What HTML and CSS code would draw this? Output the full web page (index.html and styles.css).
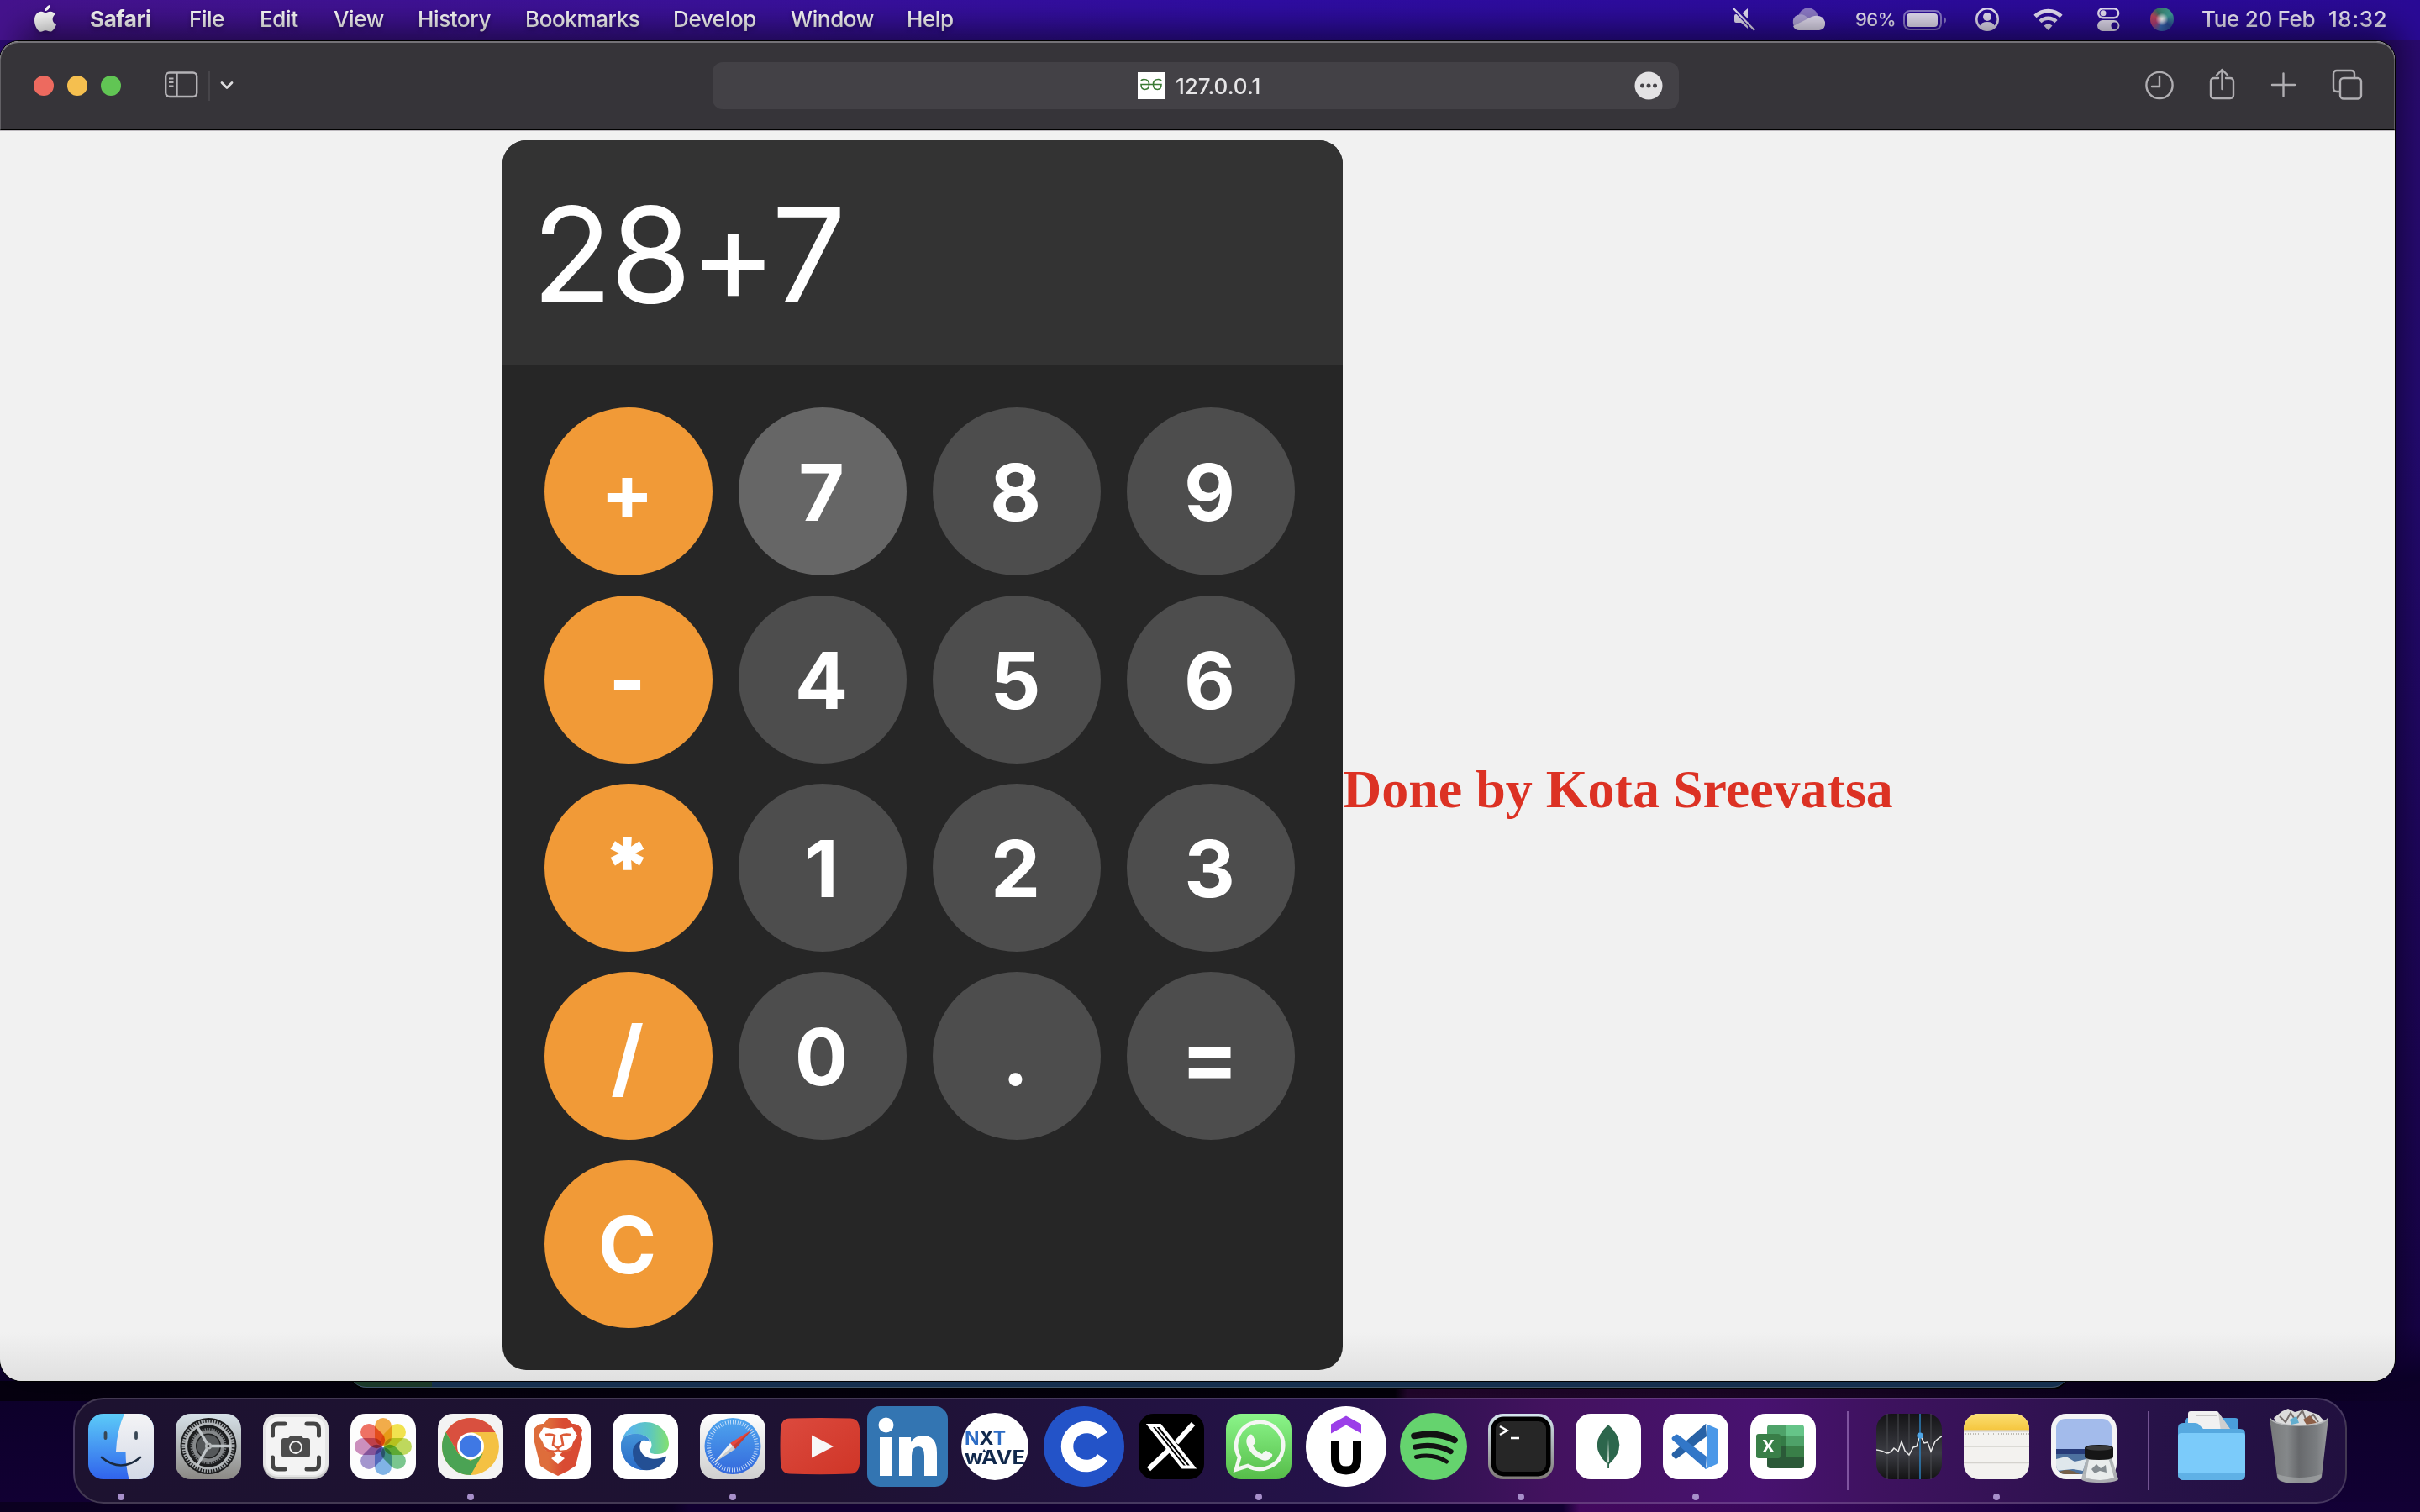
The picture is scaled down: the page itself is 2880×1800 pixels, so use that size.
FILE: index.html
```html
<!DOCTYPE html>
<html lang="en">
<head>
<meta charset="utf-8">
<title>Calculator</title>
<link rel="stylesheet" href="styles.css">
</head>
<body>
<div class="desktop">
  <header class="menubar">
    <svg class="apple" width="26" height="32" viewBox="0 0 26 32" fill="#fff"><path d="M18.300 0C18.500 3.600 16 7 12.700 7.300 12.300 4 15 .6 18.300 0zM13.200 9.200C14.500 9.200 16.500 7.600 19 7.700 21.500 7.800 23.700 9 25 11 20 14 20.800 21.200 26 23.200 24.800 26.500 22 31.500 19 31.600 16.800 31.700 16 30.300 13.300 30.300 10.600 30.300 9.700 31.700 7.600 31.700 4 31.700 0 24.500 0 18.200 0 11.500 4 7.800 8 7.800 10.200 7.800 12 9.200 13.200 9.200z"/></svg>
    <nav class="menus">
      <span class="app">Safari</span><span>File</span><span>Edit</span><span>View</span><span>History</span><span>Bookmarks</span><span>Develop</span><span>Window</span><span>Help</span>
    </nav>
    <div class="status">
      <svg width="70" height="28" viewBox="0 0 70 28"><path d="M18 1v24l-8-7H4q-2 0-2-2v-6q0-2 2-2h6z" fill="#e8e2f6"/><path d="M1 0l26 27" stroke="#2c0b99" stroke-width="6"/><path d="M1 1l25 26" stroke="#e8e2f6" stroke-width="2.200"/></svg>
      <svg width="77" height="28" viewBox="0 0 77 28"><circle cx="20" cy="12" r="11.500" fill="#8f7cca"/><path d="M9 26a9 9 0 0 1-2-17 11 11 0 0 1 12 3l8 6-17 8z" fill="#b5a8dd"/><path d="M2 22l22-11q12-4 16 6 1 9-7 10H9q-5 0-7-5z" fill="#e8e2f6"/></svg>
      <span class="percent">96%</span>
      <svg class="battery" width="86" height="26" viewBox="0 0 86 26"><rect x="1" y="2" width="44" height="22" rx="7" fill="none" stroke="#8b79cc" stroke-width="2"/><rect x="4" y="5" width="37" height="16" rx="4" fill="#e8e2f6"/><path d="M48 9q3 1 3 4t-3 4z" fill="#8b79cc"/></svg>
      <svg width="69" height="30" viewBox="0 0 69 30"><circle cx="14" cy="15" r="12.700" fill="none" stroke="#e8e2f6" stroke-width="2.600"/><circle cx="14" cy="12" r="5" fill="#e8e2f6"/><path d="M5 23q2-5 9-5t9 5q-4 4-9 4t-9-4z" fill="#e8e2f6"/></svg>
      <svg width="76" height="30" viewBox="0 0 76 30" fill="none" stroke="#e8e2f6" stroke-width="4.600"><path d="M2 11.500a22 22 0 0 1 31 0M8 17.600a13.500 13.500 0 0 1 19 0"/><path d="M17.500 28l-5-5.500q5-4 10 0z" fill="#e8e2f6" stroke="none"/></svg>
      <svg width="63" height="30" viewBox="0 0 63 30"><rect x="1.200" y="2.200" width="24" height="11" rx="5.500" fill="none" stroke="#e8e2f6" stroke-width="2.400"/><circle cx="7" cy="7.700" r="3.500" fill="#e8e2f6"/><rect x="0" y="16" width="26.400" height="13" rx="6.500" fill="#e8e2f6"/><circle cx="20.500" cy="22.500" r="4" fill="#2b0a97"/></svg>
      <i class="siri"></i>
      <span class="date">Tue 20 Feb</span><span class="clock">18:32</span>
    </div>
  </header>

  <main class="stage">
    <section class="window">
      <div class="toolbar">
        <div class="lights"><i class="red"></i><i class="yellow"></i><i class="green"></i></div>
        <svg class="sidebar" width="40" height="32" viewBox="0 0 40 32" fill="none" stroke="#b4b2b6" stroke-width="2.400"><rect x="1.200" y="1.500" width="37" height="28.500" rx="4.500"/><path d="M14.500 1.500V30"/><path d="M5 8.500h5.500M5 13h5.500M5 17.500h5.500" stroke-width="2"/></svg>
        <i class="divider"></i>
        <svg class="chevron" width="16" height="12" viewBox="0 0 16 12" fill="none" stroke="#dedddf" stroke-width="2.800" stroke-linecap="round" stroke-linejoin="round"><path d="M2 2.500l6 6 6-6"/></svg>
        <div class="address">
          <svg class="favicon" width="32" height="32" viewBox="0 0 32 32"><path fill="#fff" d="M0 0h32v32H0z"/><path d="M4 11q0-2.500 3.500-2.500 6 0 6 6t-5 6q-4.500 0-4.500-6h24q0 6-4.500 6-5 0-5-6t6-6q3.500 0 3.500 2.500" fill="none" stroke="#3b7a35" stroke-width="1.600"/></svg>
          <span class="url">127.0.0.1</span>
          <svg class="more" width="34" height="34" viewBox="0 0 34 34"><circle cx="17" cy="17" r="16.500" fill="#e3e2e4"/><g fill="#454348"><circle cx="9.500" cy="17" r="2.500"/><circle cx="17" cy="17" r="2.500"/><circle cx="24.500" cy="17" r="2.500"/></g></svg>
        </div>
        <div class="tools">
          <svg width="77" height="38" viewBox="0 0 77 38"><circle cx="17" cy="20.500" r="15.600"/><path d="M17 10v12H8"/></svg>
          <svg width="74" height="38" viewBox="0 0 74 38"><path d="M10 12H5q-4 0-4 4v16q0 4 4 4h19q4 0 4-4V16q0-4-4-4h-5M14.500 25V2M8 8.500L14.500 2 21 8.500"/></svg>
          <svg width="72" height="38" viewBox="0 0 72 38"><path d="M0 20h27M13.500 6.500v27"/></svg>
          <svg width="36" height="38" viewBox="0 0 36 38"><rect x="9" y="12" width="25" height="24.500" rx="4"/><path d="M9 28H5q-4 0-4-4V7q0-4 4-4h17q4 0 4 4v5"/></svg>
        </div>
      </div>
      <div class="page">
        <div class="calculator">
          <div class="display">28+7</div>
          <div class="keys">
            <b class="op">+</b><b class="hover">7</b><b>8</b><b>9</b>
            <b class="op">-</b><b>4</b><b>5</b><b>6</b>
            <b class="op star">*</b><b>1</b><b>2</b><b>3</b>
            <b class="op slash">/</b><b>0</b><b>.</b><b class="equals">=</b>
            <b class="op">C</b>
          </div>
        </div>
        <h1>Done by Kota Sreevatsa</h1>
      </div>
    </section>
  </main>
  <div class="behind"></div>

  <footer class="dock">
    <div class="slot run"><svg width="78" height="78" viewBox="0 0 78 78"><defs><linearGradient id="fb" x2="0" y2="1"><stop stop-color="#5ccbf8"/><stop offset="1" stop-color="#3063ec"/></linearGradient><linearGradient id="fw" x2="0" y2="1"><stop stop-color="#f4f4f6"/><stop offset="1" stop-color="#d3d9e6"/></linearGradient><clipPath id="sq"><rect width="78" height="78" rx="18"/></clipPath></defs><g clip-path="url(#sq)"><path fill="url(#fb)" d="M0 0h78v78H0z"/><path fill="url(#fw)" d="M43 0Q34 20 33 45H44.500Q44.500 63 48.500 78H78V0z"/></g><path d="M20.500 23v6M57 23v6" stroke="#384654" stroke-width="3.800" stroke-linecap="round"/><path d="M16 52Q39 71 62 52" fill="none" stroke="#1b2a3e" stroke-width="2.600" stroke-linecap="round"/></svg></div>
    <div class="slot"><svg width="78" height="78" viewBox="0 0 78 78"><defs><linearGradient id="st" x2="0" y2="1"><stop stop-color="#d6e1e8"/><stop offset="1" stop-color="#8b8985"/></linearGradient></defs><rect width="78" height="78" rx="18" fill="url(#st)"/><circle cx="39" cy="38.500" r="33.500" fill="#1c1d1e"/><g fill="none"><circle cx="39" cy="38.500" r="29.500" stroke="#a5a9ac" stroke-width="4" stroke-dasharray="1.700 1.400"/><circle cx="39" cy="38.500" r="26.500" stroke="#b4b8ba" stroke-width="3"/><circle cx="39" cy="38.500" r="20" stroke="#74777a" stroke-width="3" stroke-dasharray="1.500 1.200"/><circle cx="39" cy="38.500" r="17" stroke="#85888a" stroke-width="4"/></g><circle cx="39" cy="38.500" r="13.500" fill="#55585a"/><path d="M39 38.500h27M39 38.500L25.500 15M39 38.500L25.500 62" stroke="#c0c5c8" stroke-width="3.400"/><circle cx="39" cy="38.500" r="4" fill="#b4b8ba"/><circle cx="39" cy="38.500" r="1.500" fill="#222"/></svg></div>
    <div class="slot"><svg width="78" height="78" viewBox="0 0 78 78"><rect width="78" height="78" rx="18" fill="#c6c6c6"/><rect width="78" height="75" rx="18" fill="#e5e5e5"/><rect x="4" y="4" width="70" height="69" rx="14" fill="#f3f3f3"/><g fill="none" stroke="#444" stroke-width="5" stroke-linecap="round"><path d="M11.500 26V18q0-6 6-6H26M52 12h8.500q6 0 6 6v8M66.500 52v8q0 6-6 6H52M26 66H17.500q-6 0-6-6V52"/></g><path d="M25 29h5l3-3h12l3 3h5q3 0 3 3v17q0 3-3 3H25q-3 0-3-3V32q0-3 3-3z" fill="#4c4c4c"/><circle cx="39" cy="40" r="7" fill="#4c4c4c" stroke="#f3f3f3" stroke-width="1.800"/></svg></div>
    <div class="slot"><svg width="78" height="78" viewBox="0 0 78 78"><rect width="78" height="78" rx="18" fill="#fdfdfd"/><g class="petals"><rect x="29" y="5" width="20" height="33" rx="10" fill="#f3a536"/><rect x="29" y="5" width="20" height="33" rx="10" fill="#f2e13b" transform="rotate(45 39 39)"/><rect x="29" y="5" width="20" height="33" rx="10" fill="#b9d64c" transform="rotate(90 39 39)"/><rect x="29" y="5" width="20" height="33" rx="10" fill="#6cc283" transform="rotate(135 39 39)"/><rect x="29" y="5" width="20" height="33" rx="10" fill="#73ade6" transform="rotate(180 39 39)"/><rect x="29" y="5" width="20" height="33" rx="10" fill="#9a8bcb" transform="rotate(225 39 39)"/><rect x="29" y="5" width="20" height="33" rx="10" fill="#c884b8" transform="rotate(270 39 39)"/><rect x="29" y="5" width="20" height="33" rx="10" fill="#ef6253" transform="rotate(315 39 39)"/></g></svg></div>
    <div class="slot run"><svg width="78" height="78" viewBox="0 0 78 78"><rect width="78" height="78" rx="18" fill="#f3f3f3"/><circle cx="39" cy="39" r="34" fill="#f4c143"/><path d="M9.550 22A34 34 0 0 1 68.450 22H39L24.300 47.500z" fill="#d9503f"/><path d="M9.550 22L24.300 47.500 39 56 53.700 47.500 39 73A34 34 0 0 1 9.550 22z" fill="#4ba354"/><circle cx="39" cy="38.500" r="16" fill="#fff"/><circle cx="39" cy="38.500" r="13" fill="#3f78e4"/></svg></div>
    <div class="slot"><svg width="78" height="78" viewBox="0 0 78 78"><defs><linearGradient id="br"><stop offset=".3" stop-color="#de6d3b"/><stop offset=".6" stop-color="#d94b33"/></linearGradient></defs><rect width="78" height="78" rx="18" fill="#fff"/><path d="M28 5h22l6 7q7-1 12 7l-1 5 1 6-8 32-9 6-12 6-12-6-9-6-8-32 1-6-1-5q5-8 12-7z" fill="url(#br)"/><path d="M22 16l9 2 8-1 8 1 9-2 6 10-5 8-3 9-9 2-4 4 4 3-6 6-6-6 4-3-4-4-9-2-3-9-5-8z" fill="#fff"/><path d="M24 25q8-1 11 1l-2 11 6 4 6-4-2-11q3-2 11-1M22 40l6 4 8 1 3-2 3 2 8-1 6-4" fill="none" stroke="#dc5a37" stroke-width="2.600"/><path d="M39 48l8 5-8 7-8-7z" fill="#fff"/></svg></div>
    <div class="slot"><svg width="78" height="78" viewBox="0 0 78 78"><defs><linearGradient id="eg"><stop offset=".2" stop-color="#5ab6e8"/><stop offset=".6" stop-color="#5cc7c0"/><stop offset="1" stop-color="#83e070"/></linearGradient><linearGradient id="eb" x2="0" y2="1"><stop stop-color="#4393d8"/><stop offset="1" stop-color="#2a6bc8"/></linearGradient></defs><rect width="78" height="78" rx="18" fill="#fff"/><path d="M10 36C13 20 25 10 39 10c17 0 28 13 28 26 0 8-6 12-13 12-8 0-12-2-9-6 2-3 2-6 0-10-4-6-13-8-20-8-9 0-14 6-15 12z" fill="url(#eg)"/><path d="M10 38c0-10 8-14 17-14 9 0 16 4 18 10-7-4-13-2-15 3-4 8 4 18 10 22-2 5-1 7-1 8-17 0-29-13-29-29z" fill="url(#eb)"/><path d="M22 32c-10 7-8 24 9 34 14 4 28-2 33-14 0-1-1-2-2-1-10 5-21 3-26-4-4-6-2-11 1-15-5-3-10-3-15 0z" fill="none"/><path d="M24 32c-11 8-8 26 8 34 14 4 27-2 32-14 0-1-1-2-2-1-10 5-22 3-27-4-4-6-3-11 0-15-3-2-7-2-11 0z" fill="#234f94"/><path d="M10 38c0-10 8-14 17-14 7 0 13 2 17 7-11-2-20 6-20 14 0 9 4 16 12 22C20 66 10 53 10 38z" fill="url(#eb)"/></svg></div>
    <div class="slot run"><svg width="78" height="78" viewBox="0 0 78 78"><defs><linearGradient id="sf" x2="0" y2="1"><stop stop-color="#4fa6ee"/><stop offset="1" stop-color="#3468dc"/></linearGradient><linearGradient id="sb" x2="0" y2="1"><stop stop-color="#fff"/><stop offset="1" stop-color="#cfcfcf"/></linearGradient></defs><rect width="78" height="78" rx="18" fill="url(#sb)"/><circle cx="39" cy="38.500" r="33.500" fill="url(#sf)"/><circle cx="39" cy="38.500" r="28.500" fill="none" stroke="#cfe2f9" stroke-width="5" stroke-dasharray=".9 2.080"/><path d="M62 19L36 35 42 42z" fill="#e5483e"/><path d="M16 59L36 35l6 7z" fill="#f0f0f0"/><path d="M62 19L39 38.500l3 3.500zM16 59l23-20.500 3 3.500z" fill="#000" opacity=".15"/></svg></div>
    <div class="slot"><svg width="96" height="78" viewBox="0 0 96 78"><defs><linearGradient id="yt" x2="1" y2="1"><stop stop-color="#dc4a3e"/><stop offset="1" stop-color="#cf3527"/></linearGradient></defs><path d="M12 5.500Q48 4.500 84 5.500q10 0 11 12 1 21 0 42-1 12-11 12-36 1.500-72 0Q2 71.500 1 59.500 0 38.500 1 17.500 2 5.500 12 5.500z" fill="url(#yt)"/><path d="M38 25.500l26 13.500-26 13.500z" fill="#f7f7f7"/></svg></div>
    <div class="slot"><svg width="96" height="96" viewBox="0 0 96 96"><rect width="96" height="96" rx="15" fill="#3375b2"/><circle cx="22.500" cy="22.500" r="9" fill="#fff"/><path d="M15 37h15v46H15zM38 37h14v6q5-8 14-8 17 0 17 20v28H68V59q0-11-7-11-8 0-8 11v24H38z" fill="#fff"/></svg></div>
    <div class="slot"><svg width="80" height="80" viewBox="0 0 80 80"><circle cx="40" cy="40" r="40" fill="#fff"/><g font-family="Inter, sans-serif" font-weight="700" font-size="23"><text x="4" y="38" textLength="49" lengthAdjust="spacingAndGlyphs" fill="#2d6cc4">N<tspan fill="#10284c">X</tspan>T</text><text x="4" y="61" textLength="72" lengthAdjust="spacingAndGlyphs" fill="#10284c">wAVE</text></g><path d="M25 47l2-4 3 4z" fill="#10284c"/></svg></div>
    <div class="slot coin"><svg width="96" height="96" viewBox="0 0 96 96"><circle cx="48" cy="48" r="48" fill="#2353c8"/><path d="M70 35A23 23 0 1 0 70 61" fill="none" stroke="#fff" stroke-width="14.500"/></svg></div>
    <div class="slot"><svg width="78" height="78" viewBox="0 0 78 78"><rect width="78" height="78" rx="18" fill="#000"/><path d="M65 12L45 34.500M36 43L12 66" stroke="#fff" stroke-width="6"/><path d="M13 14H25.500L65 63.500H52.500z" fill="#000" stroke="#fff" stroke-width="4"/><path d="M19 14L59 64" stroke="#fff" stroke-width="2"/></svg></div>
    <div class="slot run"><svg width="78" height="78" viewBox="0 0 78 78"><defs><linearGradient id="wa" x2="0" y2="1"><stop stop-color="#8bf58a"/><stop offset="1" stop-color="#56bd49"/></linearGradient></defs><rect width="78" height="78" rx="18" fill="url(#wa)"/><path d="M12 66.500L16 52A28 28 0 1 1 26 62z" fill="none" stroke="#f4f7f3" stroke-width="4.600"/><path d="M27 26q3-3 5 0l3 6q1 2-3 6 4 7 11 10 3-4 5-4l7 4q1 2-2 5-4 4-10 2-14-5-18-18-2-7 2-11z" fill="#f4f7f3"/></svg></div>
    <div class="slot"><svg width="96" height="96" viewBox="0 0 96 96"><circle cx="48" cy="48" r="48" fill="#fff"/><path d="M30 21.500L48 11.500l18 10v11l-18-10-18 10z" fill="#9b3fe8"/><path d="M35 41v22q0 13.500 13 13.500T61 63V41" fill="none" stroke="#000" stroke-width="10"/></svg></div>
    <div class="slot"><svg width="80" height="80" viewBox="0 0 80 80"><circle cx="40" cy="40" r="40" fill="#65d36e"/><g fill="none" stroke="#121212" stroke-linecap="round"><path d="M17 27.500q28-6 48 5" stroke-width="7.600"/><path d="M18.500 40.500q23-5 42 5.500" stroke-width="6.300"/><path d="M19.500 52.500q20-4.500 36 5.500" stroke-width="5"/></g></svg></div>
    <div class="slot run"><svg width="78" height="78" viewBox="0 0 78 78"><defs><linearGradient id="tm" x2="0" y2="1"><stop stop-color="#d4e5ee"/><stop offset="1" stop-color="#7f7a78"/></linearGradient></defs><rect width="78" height="78" rx="18" fill="url(#tm)"/><rect x="3.500" y="3.500" width="71" height="71" rx="15" fill="#000"/><rect x="9" y="9" width="60" height="60" rx="9" fill="#262626"/><path d="M14 15l8.500 5-8.500 5M27 29h10" fill="none" stroke="#fff" stroke-width="2.600"/></svg></div>
    <div class="slot"><svg width="78" height="78" viewBox="0 0 78 78"><rect width="78" height="78" rx="18" fill="#fff"/><path d="M39 13q26 24 1 47h-2q-25-23 1-47z" fill="#2c664c"/><path d="M39 30l1 28v7h-2v-7z" fill="#d9e5dd"/><path d="M38.200 58h1.800v7h-1.800z" fill="#2c664c"/></svg></div>
    <div class="slot run"><svg width="78" height="78" viewBox="0 0 78 78"><rect width="78" height="78" rx="18" fill="#fff"/><path d="M11 47L51 12l1 15-35 26q-2 1-3 0l-3-3q-1-1 0-3z" fill="#2862a6"/><path d="M11 31q-1-2 0-3l4-3q1-1 3 0l34 26-1 15z" fill="#3277c8"/><path d="M51 12l14 6q1 1 1 3v36q0 2-2 3l-13 6-1-1q2 0 2-3V15q0-2-1-3z" fill="#4a98e8"/></svg></div>
    <div class="slot"><svg width="78" height="78" viewBox="0 0 78 78"><rect width="78" height="78" rx="18" fill="#fff"/><path d="M24 13h18v13H20v-9q0-4 4-4z" fill="#4ea269"/><path d="M42 13h18q4 0 4 4v9H42z" fill="#65c488"/><path d="M20 26h22v13H20z" fill="#347b46"/><path d="M42 26h22v13H42z" fill="#4ea269"/><path d="M20 39h22v12H20z" fill="#2b5a38"/><path d="M42 39h22v12H42z" fill="#397f48"/><path d="M20 51h44v10q0 4-4 4H24q-4 0-4-4z" fill="#2b5a38"/><rect x="7" y="24" width="29" height="29" rx="3" fill="#397f48"/><text x="21.500" y="46" text-anchor="middle" font-family="Open Sans, sans-serif" font-weight="700" font-size="21" fill="#fff">X</text></svg></div>
    <i class="split"></i>
    <div class="slot"><svg width="78" height="78" viewBox="0 0 78 78"><defs><linearGradient id="sk" x2="0" y2="1"><stop stop-color="#141416"/><stop offset=".6" stop-color="#3b3c43"/><stop offset="1" stop-color="#131314"/></linearGradient></defs><rect width="78" height="78" rx="18" fill="url(#sk)"/><path d="M13 0v78M26 0v78M39 0v78M65 0v78" stroke="#4b4c50" stroke-width="1"/><path d="M0 43q8 1 12 4 5 0 9-6l5 4 4-12 4 11 5 5 5-9 4-1 4-14 5 10 4-1 4 11 5-12q4-4 8-6" fill="none" stroke="#e8e8e8" stroke-width="1.500"/><path d="M52 0v78" stroke="#2d87c8" stroke-width="1.400"/><circle cx="52" cy="26" r="3.600" fill="#4fa6e6"/></svg></div>
    <div class="slot run"><svg width="78" height="78" viewBox="0 0 78 78"><defs><linearGradient id="nt" x2="0" y2="1"><stop stop-color="#fbdf74"/><stop offset="1" stop-color="#f5c63e"/></linearGradient></defs><g clip-path="url(#sq)"><path fill="#f3f2ef" d="M0 0h78v78H0z"/><path fill="url(#nt)" d="M0 0h78v19.500H0z"/><path d="M0 20.500h78" stroke="#a8a59c" stroke-width="1.500"/><path d="M2 24h76" stroke="#c0bdb5" stroke-width="2" stroke-dasharray="1 2"/><path d="M0 39h78M0 58.500h78" stroke="#d4d2cd" stroke-width="1.300"/></g></svg></div>
    <div class="slot"><svg class="preview" width="82" height="84" viewBox="-2 0 82 84"><rect width="78" height="78" rx="18" fill="#f4f4f5"/><clipPath id="pv"><rect x="6" y="6" width="66" height="66" rx="11"/></clipPath><g clip-path="url(#pv)"><path fill="#a3bbeb" d="M0 0h78v42H0z"/><path fill="#263a78" d="M0 42h78v10H0z"/><path fill="#4d719f" d="M0 48h78v30H0z"/><path d="M6 54l12-3 10 6 14-3-4 14-12-2-20 2z" fill="#dfe7ec"/><path d="M6 72q12-10 28 0z" fill="#75604a"/></g><path d="M42 52h30l8 26q-3 4-22 4t-22-4z" fill="#b2b5b6" opacity=".95"/><path d="M45 55h24l6 21q-17 6-34 0z" fill="#e9ecec"/><path d="M48 66l6-6 5 5 6-4 1 9-8-2-6 3z" fill="#858c91"/><path d="M40 41q0-4 17-4t17 4v11q-3 3-17 3t-17-3z" fill="#161616"/><ellipse cx="57" cy="41" rx="15" ry="2.700" fill="#3a3a3a"/></svg></div>
    <i class="split wide"></i>
    <div class="slot"><svg class="folder" width="80" height="82" viewBox="0 0 80 82"><path d="M8 12q0-4 4-4h56q4 0 4 4v14H8z" fill="#4a9edb"/><path d="M12 3q0-3 3-3h32l20 30H12z" fill="#f1f1f1"/><path d="M48 1l19 27q-9-4-16-3z" fill="#cfcfcf"/><path d="M21 5h26" stroke="#999"/><path d="M0 20q0-6 6-6h14q4 0 6 3l4 4h44q6 0 6 6v10H0z" fill="#56a9e0"/><path d="M0 30q0-4 4-4h72q4 0 4 4v45q0 7-7 7H7q-7 0-7-7z" fill="#7bcbfa"/><path d="M0 73h80v2q0 7-7 7H7q-7 0-7-7z" fill="#5fb1e6"/></svg></div>
    <div class="slot"><svg class="trash" width="70" height="90" viewBox="0 0 70 90"><defs><linearGradient id="tr"><stop stop-color="#77797a"/><stop offset=".3" stop-color="#85888a"/><stop offset=".5" stop-color="#67696c"/><stop offset=".8" stop-color="#7a7d80"/><stop offset="1" stop-color="#9a9c9e"/></linearGradient></defs><path d="M5 12L15 4l7-3 8 4 11-3 8 3 9 3 8 9-10 6H11z" fill="#dcdcdc"/><path d="M12 10l7 7 6-11 6 9 8-12 5 13 8-8 6 9" fill="none" stroke="#77706e" stroke-width="2"/><path d="M24 14l8-4 3 8-9 2z" fill="#63aecf"/><path d="M40 14l8-5 8 9-12 2z" fill="#8c5f48"/><path d="M0 12q6 9 35 9t35-9l-8 70q-1 8-27 8T9 82z" fill="url(#tr)"/><path d="M0 12q6 9 35 9t35-9" fill="none" stroke="#b5b7b9" stroke-width="1.500"/><path d="M9 79q26 8 53 0l-1 4q-4 7-26 7T10 83z" fill="#a2a5a7" opacity=".7"/></svg></div>
  </footer>
</div>
</body>
</html>
```
FILE: styles.css
```css
* { box-sizing: border-box; }
body { margin: 0; font-family: Inter, "Liberation Sans", sans-serif; }
svg { display: block; flex: none; }
i { display: block; flex: none; }

.desktop {
  position: relative;
  display: flex;
  flex-direction: column;
  width: 2880px;
  height: 1800px;
  overflow: hidden;
  background:
    linear-gradient(to right, #0b0020 0, #0c0022 800px, #120031 820px, #120031 1860px, #43095e 1880px, #38085a 2150px, #14003a 2500px, #120034 100%) 0 1788px / 100% 12px no-repeat,
    linear-gradient(to right, #05000f 0, #030009 1660px, #20062a 1675px, #180522 2150px, #08001a 2550px, #0d0028 100%) 0 1644px / 100% 24px no-repeat,
    linear-gradient(to bottom, #2b0a70 0, #240a72 500px, #1d0558 1100px, #170346 1580px, #0c0028 1640px, #120034 100%);
}

.menubar {
  display: flex;
  align-items: center;
  height: 48px;
  padding: 0 0 2px 41px;
  flex: none;
  color: #fff;
  font-size: 26px;
  font-weight: 500;
  white-space: nowrap;
  background: linear-gradient(to right, #45138d, #3a119b 900px, #2f0da3 1500px, #2a0a96 2880px);
}
.apple { margin-top: -2px; filter: drop-shadow(0 3px 3px rgba(0, 0, 0, .25)); }
.menus {
  display: grid;
  grid-template-columns: 118px 84px 88px 100px 128px 176px 140px 138px 60px;
  margin: -1px 0 0 40px;
  letter-spacing: -.38px;
  text-shadow: 0 3px 5px rgba(0, 0, 0, .3);
}
.app { font-weight: 700; }
.status { display: flex; align-items: center; margin-left: auto; width: 818px; color: #ece7f8; }
.percent { width: 56px; padding-right: 2px; margin-left: -1px; margin-right: 1px; font-size: 22px; letter-spacing: -.5px; }
.battery { margin-top: 1px; }
.siri {
  width: 28px;
  height: 28px;
  border-radius: 50%;
  background: radial-gradient(circle, #fff 0, rgba(255, 255, 255, .7) 15%, transparent 38%), conic-gradient(#3d8a78, #3f9f98 60deg, #2c4f9c 130deg, #3d6fc0 190deg, #b03c78 240deg, #c04860 290deg, #3c6f66 330deg, #3d8a78);
}
.date { width: 151px; margin: -1px 0 0 33px; letter-spacing: -.3px; }
.clock { margin-top: -1px; letter-spacing: .55px; }

.stage { flex: none; height: 1596px; padding-top: 1px; position: relative; z-index: 1; }
.window {
  display: flex;
  flex-direction: column;
  width: 2850px;
  height: 1595px;
  border-radius: 22px 22px 26px 26px;
  overflow: hidden;
  background: #f1f1f1;
  box-shadow: 0 0 0 1px #000, 14px -24px 40px -10px rgba(0, 0, 0, .55);
}
.toolbar {
  display: flex;
  align-items: center;
  flex: none;
  height: 106px;
  padding: 0 0 1px 39px;
  border: 1px solid #626065;
  border-top: 2px solid #747277;
  border-bottom: 1px solid #000;
  border-radius: 22px 22px 0 0;
  background: #363439;
}
.lights { display: flex; gap: 16px; }
.lights i { width: 24px; height: 24px; border-radius: 50%; }
.red { background: #ed6a5f; }
.yellow { background: #f5bf4f; }
.green { background: #61c554; }
.sidebar { margin-left: 52px; margin-top: -2px; }
.divider { width: 2px; height: 36px; margin-left: 12px; background: #47454a; }
.chevron { margin-left: 12px; }
.address {
  display: flex;
  align-items: center;
  width: 1150px;
  height: 56px;
  margin-left: 570px;
  padding-left: 506px;
  padding-right: 19px;
  border-radius: 12px;
  background: #434146;
}
.url { margin-left: 13px; color: #e6e5e7; font-size: 26px; font-weight: 500; letter-spacing: 0; }
.more { margin-left: auto; }
.tools { display: flex; margin-left: 555px; margin-top: -4px; }
.tools svg { fill: none; stroke: #b0aeb2; stroke-width: 2.400; stroke-linecap: round; stroke-linejoin: round; overflow: visible; }

.page {
  display: flex;
  flex: 1;
  justify-content: center;
  align-items: center;
  border-top: 1px solid #bdb9be;
  background: linear-gradient(to bottom, transparent 1430px, #e0e0e0 100%);
}
.calculator { width: 1000px; height: 1464px; margin-bottom: 2px; border-radius: 28px; overflow: hidden; background: #262626; flex: none; }
.display {
  height: 268px;
  padding-left: 35px;
  line-height: 273px;
  font-size: 157px;
  letter-spacing: -2.700px;
  color: #fff;
  background: #333;
}
.keys {
  display: grid;
  grid-template-columns: repeat(4, 200px);
  grid-auto-rows: 200px;
  gap: 24px 31px;
  padding: 50px;
}
.keys b {
  border-radius: 50%;
  background: #4d4d4d;
  color: #fff;
  font-size: 94px;
  line-height: 202px;
  text-align: center;
  text-indent: -3px;
}
.keys .op { background: #f19a37; }
.keys .hover { background: #666; }
.keys .star { line-height: 196px; font-size: 92px; -webkit-text-stroke: 2px #fff; }
.keys .slash { font-size: 101px; }
.keys .equals { font-size: 102px; }
h1 {
  margin: 0;
  padding-top: 79px;
  width: 654px;
  flex: none;
  white-space: nowrap;
  font: 700 64px/74px "Liberation Serif", "Times New Roman", serif;
  color: #dc3224;
}

.behind {
  position: absolute;
  left: 416px;
  top: 1620px;
  width: 2046px;
  height: 32px;
  border-bottom: 1px solid #41556b;
  border-radius: 0 0 20px 20px;
  box-shadow: 0 1px 0 1px #000;
  background: linear-gradient(to right, #1c3a29 98px, #16304f 98px);
}

.dock {
  position: relative;
  display: flex;
  align-items: center;
  flex: none;
  width: 2706px;
  height: 126px;
  margin: 20px 0 0 87px;
  padding: 0 3px 10px;
  border: 2px solid rgba(255, 255, 255, .17);
  border-radius: 36px;
  background: linear-gradient(to right, #1d1230, #1e1233 900px, #241249 1500px, #43125f 1760px, #481270 2000px, #3e125f 2150px, #271248 2480px, #21103f) padding-box;
  background-clip: border-box;
}
.slot { position: relative; display: flex; justify-content: center; align-items: center; width: 104px; height: 100px; flex: none; }
.run::after {
  content: "";
  position: absolute;
  left: 48px;
  bottom: -14px;
  width: 8px;
  height: 8px;
  border-radius: 50%;
  background: #a78fca;
}
.coin { margin-left: 2px; }
.petals rect { mix-blend-mode: multiply; opacity: .9; }
.preview { margin-top: 6px; }
.split { width: 2px; height: 94px; margin: 10px 20px 0 24px; background: rgba(190, 150, 220, .5); }
.wide { margin-right: 22px; }
.folder { margin-top: -3px; }
.trash { margin-top: -3px; }
```
